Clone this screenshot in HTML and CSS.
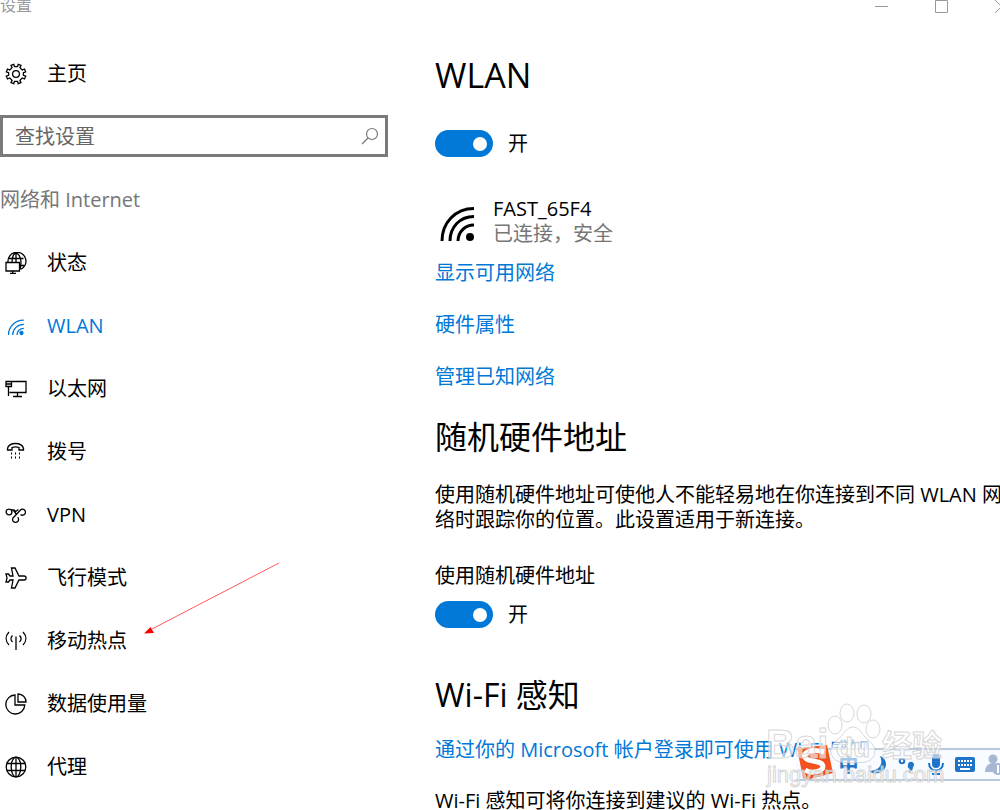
FILE: index.html
```html
<!DOCTYPE html>
<html lang="zh-CN">

<head>
    <meta charset="UTF-8">
    <meta name="viewport" content="width=device-width, initial-scale=1.0">
    <title>设置</title>
    <link rel="stylesheet" href="styles.css">
</head>

<body>
    <header class="titlebar">
        <span>设置</span>
        <div class="window-buttons">
            <button type="button" aria-label="最小化">
                <svg width="15" height="15"><path d="M1 7.500h13" /></svg>
            </button>
            <button type="button" aria-label="最大化">
                <svg width="15" height="15"><path d="M1.500 1.500h12v12h-12z" /></svg>
            </button>
            <button type="button" aria-label="关闭">
                <svg width="15" height="15"><path d="M1 1l13 13M14 1L1 14" /></svg>
            </button>
        </div>
    </header>

    <div class="layout">
        <aside class="sidebar">
            <a class="item" href="#home">
                <svg class="icon" viewBox="0 0 22 22">
                    <path d="M9.500 3.600L8.800 1.300 6 2.400l1.100 2.200-2.400 2.400L2.500 6 1.300 8.800l2.300.8v2.800l-2.300.8L2.500 16l2.200-1 2.400 2.400L6 19.600l2.800 1.100.7-2.300h3l.7 2.300 2.800-1.100-1.100-2.200 2.400-2.400 2.200 1 1.200-2.800-2.300-.8V9.600l2.300-.8L19.500 6l-2.200 1-2.400-2.400L16 2.400l-2.800-1.100-.7 2.300z" />
                    <circle cx="11" cy="11" r="3.400" />
                </svg>
                <span>主页</span>
            </a>

            <form class="search">
                <input type="search" placeholder="查找设置" aria-label="查找设置">
                <button type="submit" aria-label="搜索">
                    <svg width="18" height="18"><circle cx="11" cy="7" r="5.500" /><path d="M7 11l-6 6" /></svg>
                </button>
            </form>

            <h2 class="group">网络和 Internet</h2>

            <nav>
                <a class="item" href="#status">
                    <svg class="icon" viewBox="0 0 22 22">
                        <path d="M3 10a9 9 0 1 1 12.500 7.500M7 10C7 5 9 1 11 1s5 4 5 9-1 7-1 7M11 1v9M4 6.500h14.500M15 13.500h4" />
                        <path d="M1 10.500h13.500v8.500H1zM7.700 19v2.300M5 21.300h6" />
                    </svg>
                    <span>状态</span>
                </a>
                <a class="item active" href="#wlan" aria-current="page">
                    <svg class="icon" viewBox="0 0 22 22">
                        <path d="M3.500 20C3.500 11.500 10 5.200 18.800 5.200M7.700 20c0-6 5-10.700 11.100-10.700M12 20c0-3.800 3-6.600 6.800-6.600" />
                        <circle cx="16.500" cy="18" r="1.500" class="solid" />
                    </svg>
                    <span>WLAN</span>
                </a>
                <a class="item" href="#ethernet">
                    <svg class="icon" viewBox="0 0 22 22">
                        <path d="M6.500 3.500H21v11H4.500M1 3.500h5.500v5H1zM1 6h5.500M3.500 8.500v9.500M12.500 14.500v4M8 18.500h9" />
                    </svg>
                    <span>以太网</span>
                </a>
                <a class="item" href="#dialup">
                    <svg class="icon" viewBox="0 0 22 22">
                        <path d="M2.500 7.500C4 .800 17 .800 18.500 7.500v1.500h-4.500V6.500c-2-.8-5-.8-7 0V9H2.500z" />
                        <path class="dots" d="M6 12.500h9M6 16.500h9" />
                    </svg>
                    <span>拨号</span>
                </a>
                <a class="item" href="#vpn">
                    <svg class="icon" viewBox="0 0 22 22">
                        <circle cx="4" cy="8" r="2.900" />
                        <path d="M6 6c1.500-.8 2.300.2 3 1.200l2.500 3.300M8.500 5.500l2.300 2 2.500-2M8.500 13.500L15 6.500a3 3 0 1 1 .5 4M8.500 13.300a3 3 0 1 0 4.200 0" />
                    </svg>
                    <span>VPN</span>
                </a>
                <a class="item" href="#airplane">
                    <svg class="icon" viewBox="0 0 22 22">
                        <path d="M6.500 1H10l4 8h5c2.800 0 2.800 4 0 4h-5l-4 8H6.500L8 13H5l-1.500 2H1l1-4-1-4h2.500L5 9h3z" />
                    </svg>
                    <span>飞行模式</span>
                </a>
                <a class="item" href="#hotspot">
                    <svg class="icon" viewBox="0 0 22 22">
                        <path d="M11 6.500V20M7.500 5.500c-2 2-2 4.500 0 6.500M14.500 5.500c2 2 2 4.500 0 6.500M4 2c-3.800 4-3.800 9 0 13M18 2c3.800 4 3.800 9 0 13" />
                    </svg>
                    <span>移动热点</span>
                </a>
                <a class="item" href="#usage">
                    <svg class="icon" viewBox="0 0 22 22">
                        <path d="M10 2a9.500 9.500 0 1 0 9.800 10H10zM13 1v8h8c0-4.500-3.500-8-8-8z" />
                    </svg>
                    <span>数据使用量</span>
                </a>
                <a class="item" href="#proxy">
                    <svg class="icon" viewBox="0 0 22 22">
                        <circle cx="11" cy="11" r="9.800" />
                        <ellipse cx="11" cy="11" rx="4.800" ry="9.800" />
                        <path d="M11 1v20M2 7.500h18M2 14.500h18" />
                    </svg>
                    <span>代理</span>
                </a>
            </nav>
        </aside>

        <main class="content">
            <h1>WLAN</h1>
            <label class="toggle">
                <input type="checkbox" role="switch" checked>
                <span>开</span>
            </label>

            <div class="network">
                <svg width="58" height="50" viewBox="0 0 58 50">
                    <path d="M7 45C7 27 20 12.500 39 12.500M15 45c0-14 10-24.500 24-24.500M23 45c0-9 7-16 16-16" />
                    <circle cx="35" cy="41" r="4" />
                </svg>
                <div>
                    <div>FAST_65F4</div>
                    <div class="muted">已连接，安全</div>
                </div>
            </div>

            <div class="links">
                <a href="#available">显示可用网络</a>
                <a href="#hardware">硬件属性</a>
                <a href="#known">管理已知网络</a>
            </div>

            <h2>随机硬件地址</h2>
            <p>使用随机硬件地址可使他人不能轻易地在你连接到不同 WLAN 网络时跟踪你的位置。此设置适用于新连接。</p>
            <label class="caption" for="random">使用随机硬件地址</label>
            <div class="toggle random">
                <input type="checkbox" role="switch" id="random" checked>
                <span>开</span>
            </div>

            <h2>Wi-Fi 感知</h2>
            <a class="sense" href="#sense">通过你的 Microsoft 帐户登录即可使用 Wi-Fi 感知</a>
            <p>Wi-Fi 感知可将你连接到建议的 Wi-Fi 热点。</p>
        </main>
    </div>

    <!-- red arrow pointing at the hotspot entry -->
    <svg class="arrow" width="136" height="74" viewBox="0 0 136 74">
        <path d="M135 1L8 67" stroke="#ff5a5a" />
        <path d="M0 71.500L6.500 65l3.500 6z" fill="#f00" />
    </svg>

    <!-- input method bar -->
    <div class="ime">
        <svg class="ime-logo" width="38" height="36" viewBox="0 0 38 36">
            <path d="M1 3l30-3 6 28-27 7-3-2z" fill="#f4511e" />
            <path d="M28 7C17 4 7 6 9 12c1 5 17 3 18 9 0 6-12 8-18 4" fill="none" stroke="#fff" stroke-width="5" />
        </svg>
        <button type="button">中</button>
        <button type="button" aria-label="半角">
            <svg width="20" height="20"><path d="M12 1c4 8-1 15-11 15 5 5 17 2 17-7 0-4-3-7-6-8z" /></svg>
        </button>
        <button type="button" aria-label="标点">
            <svg width="20" height="20"><circle cx="5" cy="6" r="2.300" fill="none" stroke="#1d74c8" stroke-width="2" /><path d="M11 10a3 3 0 1 1 5 2c0 3-2 5-4 6v-2l1-2a3 3 0 0 1-2-4z" /></svg>
        </button>
        <button type="button" aria-label="语音">
            <svg width="20" height="22"><rect x="6" y="0" width="8" height="14" rx="4" /><path d="M3 9c0 10 14 10 14 0M10 17v4M6 20h8" fill="none" stroke="#1d74c8" stroke-width="2" /></svg>
        </button>
        <button type="button" aria-label="软键盘">
            <svg width="22" height="18"><rect x="1" y="1" width="20" height="15" rx="2" /><path d="M4 5h15M4 9h15" stroke="#fff" stroke-width="2" stroke-dasharray="2 1" /><path d="M6 13h10" stroke="#fff" stroke-width="2" /></svg>
        </button>
        <button type="button" aria-label="账户">
            <svg width="22" height="22"><g fill="#a8b7d3"><circle cx="10" cy="5" r="4.500" /><path d="M2 18c0-12 16-12 16 0z" /><circle cx="15" cy="15" r="6" /></g><path d="M15 11v8" stroke="#fff" stroke-width="2" /></svg>
        </button>
    </div>

    <svg class="watermark" width="186" height="92" viewBox="0 0 186 92">
        <ellipse cx="69" cy="27" rx="7" ry="9" />
        <ellipse cx="81" cy="15" rx="7" ry="9" />
        <ellipse cx="98" cy="16" rx="7" ry="9" />
        <ellipse cx="107" cy="31" rx="7" ry="9" />
        <path d="M87 29c7 0 9 8 15 13 11 8 8 20-3 22-6 1-18 1-24 0-11-2-14-14-4-22 7-5 9-13 16-13z" />
        <text class="bold" x="0" y="60" font-size="40">Bai</text>
        <text class="bold" x="70" y="59" font-size="28">du</text>
        <text class="bold" x="116" y="58" font-size="30">经验</text>
        <text x="1" y="84" font-size="22">jingyan.baidu.com</text>
    </svg>
</body>

</html>
```
FILE: styles.css
```css
* {
    margin: 0;
    padding: 0;
    box-sizing: border-box;
}

html, body {
    height: 100%;
    overflow: hidden;
}

body {
    position: relative;
    background: #fff;
    color: #000;
    font-family: "Open Sans", "Noto Sans CJK SC", sans-serif;
    font-size: 20px;
    line-height: 25px;
}

a {
    color: #0078d7;
    text-decoration: none;
}

button {
    border: none;
    background: none;
}

input, button {
    font: inherit;
}

svg {
    display: block;
    flex: none;
    fill: none;
}

/* Title bar */
.titlebar {
    display: flex;
    justify-content: space-between;
    align-items: flex-end;
    height: 14px;
    color: #999;
    font-size: 16px;
    line-height: 18px;
}

.window-buttons {
    display: flex;
    gap: 45px;
    margin-right: -9px;
}

.window-buttons svg {
    stroke: #999;
}

/* Page columns */
.layout {
    display: grid;
    grid-template-columns: 388px 1fr;
    column-gap: 47px;
}

.sidebar {
    padding-top: 28px;
}

.item {
    display: flex;
    align-items: center;
    gap: 20px;
    height: 63px;
    padding-left: 5px;
    color: #000;
}

.icon {
    width: 22px;
    height: 22px;
    stroke: currentColor;
    stroke-width: 1.3;
}

.icon .solid {
    fill: currentColor;
}

.icon .dots {
    stroke-width: 2;
    stroke-dasharray: 1 3;
}

.item.active {
    color: #0078d7;
}

.search {
    display: flex;
    align-items: center;
    height: 42px;
    margin-top: 10px;
    padding-right: 6px;
    border: 3px solid #7a7a7a;
}

.search input {
    flex: 1;
    min-width: 0;
    padding-left: 12px;
    border: none;
    outline: none;
}

.search input::placeholder {
    color: #666;
}

.search svg {
    stroke: #777;
    stroke-width: 1.2;
}

.group {
    margin: 30px 0 19px;
    color: #767676;
    font-size: 20px;
    font-weight: 400;
}

/* Settings */
.content {
    padding-top: 39px;
}

.content h1, .content h2 {
    font-size: 32px;
    font-weight: 400;
    line-height: 44px;
}

.content h1 {
    font-size: 34px;
}

.toggle {
    display: flex;
    align-items: center;
    gap: 15px;
    height: 27px;
    margin: 33px 0 39px;
}

.toggle input {
    display: flex;
    align-items: center;
    justify-content: flex-end;
    width: 58px;
    height: 27px;
    padding-right: 6px;
    border-radius: 14px;
    background: #0078d7;
    appearance: none;
}

.toggle input::before {
    content: "";
    width: 14px;
    height: 14px;
    border-radius: 50%;
    background: #fff;
}

.toggle.random {
    margin: 13px 0 45px;
}

.network {
    display: flex;
}

.network path {
    stroke: #000;
    stroke-width: 3;
}

.network circle {
    fill: #000;
}

.muted {
    color: #767676;
}

.links {
    display: flex;
    flex-direction: column;
    align-items: flex-start;
    gap: 27px;
    margin: 14px 0 26px;
}

.content p {
    margin: 23px -4px 31px 0;
}

.caption {
    display: block;
}

.sense {
    display: block;
    margin-top: 20px;
}

.content .sense + p {
    margin-top: 26px;
}

/* Things floating over the page */
.arrow {
    position: absolute;
    top: 562px;
    left: 144px;
}

.ime {
    position: absolute;
    right: -8px;
    bottom: 29px;
    display: flex;
    align-items: center;
    height: 33px;
    border: solid #b9c9dc;
    border-width: 2px 0;
    background: #f8fbff;
}

.ime-logo {
    margin-top: -4px;
}

.ime button {
    display: flex;
    justify-content: center;
    width: 29px;
    color: #1d74c8;
    font-weight: 700;
}

.ime button svg {
    fill: #1d74c8;
}

.watermark {
    position: absolute;
    right: 48px;
    bottom: 20px;
    pointer-events: none;
    font-family: "Liberation Sans", "Noto Sans CJK SC", sans-serif;
    fill: #fff;
    fill-opacity: 0.6;
    stroke: #ccc;
    stroke-opacity: 0.8;
}

.watermark .bold {
    font-weight: 700;
}
```
